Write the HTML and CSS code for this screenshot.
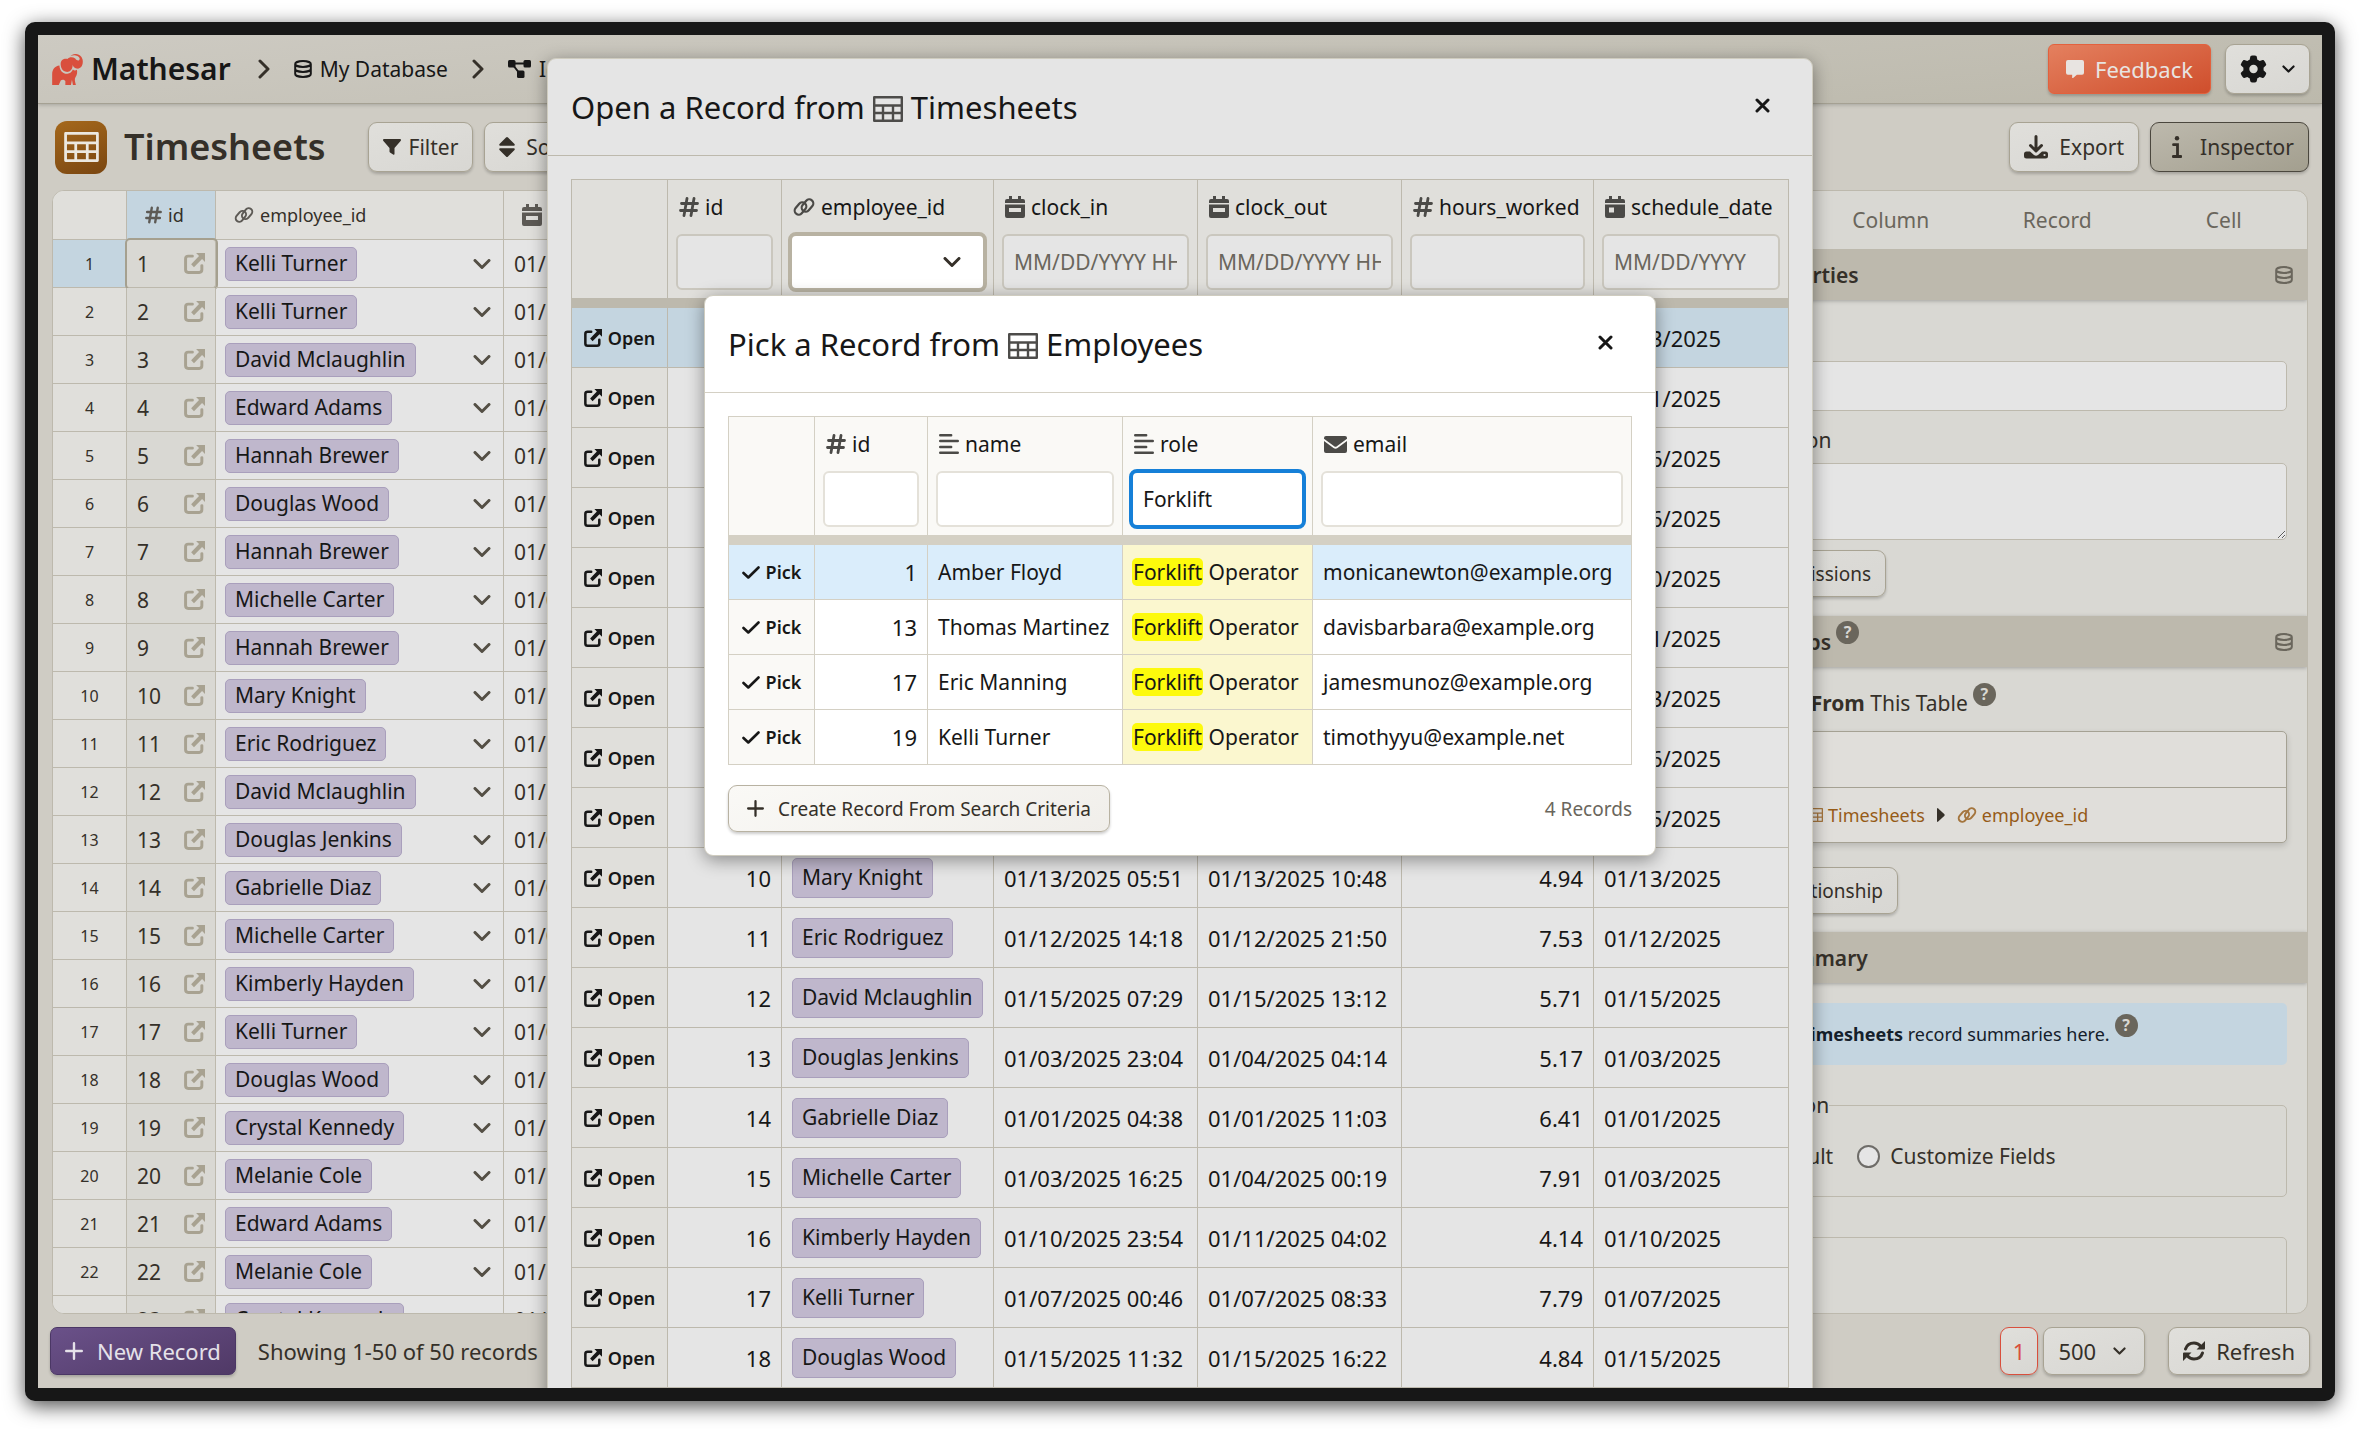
FILE: index.html
```html
<!DOCTYPE html>
<html lang="en">
<head>
    <meta charset="UTF-8">
    <meta name="viewport" content="width=device-width, initial-scale=1.0">
    <title>Timesheets | Mathesar</title>
    <link rel="stylesheet" href="styles.css">
</head>
<body>

<!-- Icon sprite -->
<svg class="sprite" aria-hidden="true">
    <symbol id="i-logo" viewBox="0 0 93 94">
        <path fill="currentColor" d="M0 94V62C0 46 8 37 22 35C23 52 34 61 46 60C54 59 60 54 63 47C66 51 71 51 75 48C77 57 75 64 71 70C67 76 69 84 72 94H63L60 78L57 94H40V82C36 77 30 77 26 80L20 94z"/>
        <path fill="currentColor" d="M26 34C24 20 34 13 46 15C52 9 62 8 70 14C77 24 85 20 83 12C78 4 66 1 55 7C64-4 87-3 92 16C96 34 86 47 74 44C67 43 63 38 62 32C63 47 53 56 42 54C32 52 27 44 26 34z"/>
    </symbol>
    <symbol id="i-chevron-right" viewBox="0 0 12 20"><path d="M2 2l8 8-8 8" fill="none" stroke="currentColor" stroke-width="3" stroke-linecap="round" stroke-linejoin="round"/></symbol>
    <symbol id="i-chevron-down" viewBox="0 0 18 10"><path d="M2 1.500l7 7 7-7" fill="none" stroke="currentColor" stroke-width="3" stroke-linecap="round" stroke-linejoin="round"/></symbol>
    <symbol id="i-database" viewBox="0 0 18 18"><path d="M1.200 4c0-1.600 3.500-2.900 7.800-2.900S16.800 2.400 16.800 4 13.300 6.900 9 6.900 1.200 5.600 1.200 4zM1.200 4v10c0 1.600 3.500 2.900 7.800 2.900s7.800-1.300 7.800-2.900V4M1.200 9c0 1.600 3.500 2.900 7.800 2.900S16.800 10.600 16.800 9" fill="none" stroke="currentColor" stroke-width="2"/></symbol>
    <symbol id="i-schema" viewBox="0 0 23 18"><path d="M6 3.500h12M5 5l7 9" fill="none" stroke="currentColor" stroke-width="2"/><rect x="0" y="0" width="7.500" height="7.500" rx="1.500" fill="currentColor"/><rect x="15.500" y="0" width="7.500" height="7.500" rx="1.500" fill="currentColor"/><rect x="9" y="10.500" width="7.500" height="7.500" rx="1.500" fill="currentColor"/></symbol>
    <symbol id="i-table" viewBox="0 0 30 26"><path d="M1.200 1.200h27.600v23.600H1.200zM1 9.500h28M1 17h28M10 9.500V25M20 9.500V25" fill="none" stroke="currentColor" stroke-width="2.400" stroke-linejoin="round"/></symbol>
    <symbol id="i-filter" viewBox="0 0 18 16"><path d="M0 1q0-1 1-1h16q1 0 1 1 0 .6-.4 1L11.500 9v6q0 1-1 .8L7 13.500q-.5-.4-.5-1V9L.4 2Q0 1.600 0 1z" fill="currentColor"/></symbol>
    <symbol id="i-sort" viewBox="0 0 16 20"><path d="M7 .6q1-1 2 0l6.500 6.500q.9 1.400-.8 1.700H1.300Q-.4 8.500.5 7.100zM7 19.400q1 1 2 0l6.500-6.500q.9-1.400-.8-1.700H1.300q-1.700.3-.8 1.700z" fill="currentColor"/></symbol>
    <symbol id="i-hash" viewBox="0 0 20 20"><path d="M8 1.500L5 18.500M15 1.500L12 18.500M2.500 6.500h16M1.500 13.500h16" fill="none" stroke="currentColor" stroke-width="2.800" stroke-linecap="round"/></symbol>
    <symbol id="i-link" viewBox="0 0 22 18"><g fill="none" stroke="currentColor" stroke-width="2.200"><rect x="-4" y="-6.800" width="8" height="13.600" rx="4" transform="translate(7.500 10.500) rotate(40)"/><rect x="-4" y="-6.800" width="8" height="13.600" rx="4" transform="translate(14.500 7.500) rotate(40)"/></g></symbol>
    <symbol id="i-calendar" viewBox="0 0 20 22"><path d="M4 0h3v3h6V0h3v3h2q2 0 2 2v2H0V5q0-2 2-2h2zM0 8.500h20V20q0 2-2 2H2q-2 0-2-2zM4 12v4h12v-4z" fill="currentColor" fill-rule="evenodd"/></symbol>
    <symbol id="i-calendar-day" viewBox="0 0 20 22"><path d="M4 0h3v3h6V0h3v3h2q2 0 2 2v2H0V5q0-2 2-2h2zM0 8.500h20V20q0 2-2 2H2q-2 0-2-2zM4 11.500v5h5v-5z" fill="currentColor" fill-rule="evenodd"/></symbol>
    <symbol id="i-open" viewBox="0 0 20 20"><path d="M8 3H4Q1.500 3 1.500 5.500v10.500Q1.500 18.500 4 18.500h10.500q2.500 0 2.500-2.500v-4" fill="none" stroke="currentColor" stroke-width="2.800" stroke-linecap="round"/><path d="M11.500 0H20v8.500l-2.800-2.800-7.700 7.800L6.800 10.600l7.500-7.800z" fill="currentColor"/></symbol>
    <symbol id="i-text" viewBox="0 0 20 20"><path d="M1.200 1.300h11M1.200 7h17.600M1.200 13h11M1.200 18.700h17.600" fill="none" stroke="currentColor" stroke-width="2.400" stroke-linecap="round"/></symbol>
    <symbol id="i-mail" viewBox="0 0 23 17"><path d="M2 0h19q2 0 2 2v.8l-10.500 7.600q-1 .7-2 0L0 2.800V2q0-2 2-2zM0 5l9.500 7q2 1.400 4 0L23 5v10q0 2-2 2H2q-2 0-2-2z" fill="currentColor"/></symbol>
    <symbol id="i-check" viewBox="0 0 18 13"><path d="M1.500 7l4.800 4.500L16.500 1.500" fill="none" stroke="currentColor" stroke-width="2.600" stroke-linecap="round" stroke-linejoin="round"/></symbol>
    <symbol id="i-close" viewBox="0 0 15 15"><path d="M2 2l11 11M13 2L2 13" fill="none" stroke="currentColor" stroke-width="3" stroke-linecap="round"/></symbol>
    <symbol id="i-plus" viewBox="0 0 18 18"><path d="M9 1.200v15.600M1.200 9h15.600" fill="none" stroke="currentColor" stroke-width="2.400" stroke-linecap="round"/></symbol>
    <symbol id="i-chat" viewBox="0 0 19 19"><path d="M2 0h15q2 0 2 2v11.500q0 2-2 2h-5.500L7.500 19q-1 .5-1-.5v-3H2q-2 0-2-2V2q0-2 2-2z" fill="currentColor"/></symbol>
    <symbol id="i-gear" viewBox="0 0 512 512"><path fill="currentColor" d="M495.900 166.600c3.200 8.700 .5 18.400-6.400 24.600l-43.300 39.400c1.100 8.300 1.700 16.800 1.700 25.400s-.6 17.100-1.700 25.400l43.300 39.400c6.900 6.200 9.600 15.900 6.400 24.600c-4.400 11.900-9.700 23.300-15.800 34.300l-4.700 8.100c-6.600 11-14 21.400-22.100 31.200c-5.900 7.200-15.700 9.600-24.500 6.800l-55.700-17.700c-13.400 10.300-28.200 18.900-44 25.400l-12.500 57.100c-2 9.100-9 16.300-18.200 17.800c-13.800 2.300-28 3.500-42.500 3.500s-28.700-1.200-42.500-3.500c-9.200-1.500-16.200-8.700-18.200-17.800l-12.500-57.100c-15.800-6.500-30.600-15.100-44-25.400L83.100 425.900c-8.800 2.800-18.600 .3-24.500-6.800c-8.100-9.800-15.500-20.200-22.100-31.200l-4.700-8.100c-6.100-11-11.400-22.400-15.800-34.300c-3.200-8.700-.5-18.400 6.400-24.600l43.300-39.400C64.600 273.100 64 264.600 64 256s.6-17.100 1.700-25.400L22.400 191.200c-6.900-6.200-9.600-15.900-6.400-24.600c4.400-11.900 9.700-23.300 15.800-34.300l4.700-8.100c6.600-11 14-21.400 22.100-31.200c5.900-7.200 15.700-9.600 24.500-6.800l55.700 17.700c13.400-10.300 28.200-18.900 44-25.400l12.500-57.100c2-9.100 9-16.300 18.200-17.800C227.300 1.200 241.500 0 256 0s28.700 1.200 42.500 3.500c9.200 1.500 16.200 8.700 18.200 17.800l12.500 57.100c15.800 6.500 30.600 15.100 44 25.400l55.700-17.700c8.800-2.800 18.600-.3 24.500 6.800c8.100 9.800 15.500 20.200 22.100 31.200l4.700 8.100c6.100 11 11.400 22.400 15.800 34.300zM256 336a80 80 0 1 0 0-160 80 80 0 1 0 0 160z"/></symbol>
    <symbol id="i-download" viewBox="0 0 24 24"><path d="M12 1.500v14M6.500 10.500l5.500 5.500 5.500-5.500" fill="none" stroke="currentColor" stroke-width="3" stroke-linecap="round" stroke-linejoin="round"/><path d="M2.500 16.500H6l4 3.500q2 1.500 4 0l4-3.500h3.500Q24 16.500 24 19v2q0 2.500-2.500 2.500h-19Q0 23.500 0 21v-2q0-2.500 2.500-2.500z" fill="currentColor"/><circle cx="20.500" cy="20" r="1.100" fill="#dddcd8"/></symbol>
    <symbol id="i-info" viewBox="0 0 10 22"><path d="M1.500 8.700h4v11.500M1.200 20.500h7.800" fill="none" stroke="currentColor" stroke-width="2.800" stroke-linecap="round"/><circle cx="5" cy="2.200" r="2.200" fill="currentColor"/></symbol>
    <symbol id="i-refresh" viewBox="0 0 22 22"><path d="M2.500 9Q4.500 3 11 3q4 0 7 3.500M19.500 13Q17.500 19 11 19q-4 0-7-3.500" fill="none" stroke="currentColor" stroke-width="3" stroke-linecap="round"/><path d="M22 1v7.500q0 1-1 1h-7.500zM0 21v-7.500q0-1 1-1h7.500z" fill="currentColor"/></symbol>
    <symbol id="i-caret" viewBox="0 0 8 14"><path d="M0 1q0-1.500 1.200-.6l6 5.600q1 1 0 2l-6 5.600Q0 14.500 0 13z" fill="currentColor"/></symbol>
</svg>

<div class="window">
    <header class="topbar">
        <nav class="breadcrumb">
            <a href="#" class="brand"><svg class="icon logo"><use href="#i-logo"/></svg>Mathesar</a>
            <svg class="icon sep"><use href="#i-chevron-right"/></svg>
            <a href="#"><svg class="icon db"><use href="#i-database"/></svg>My Database</a>
            <svg class="icon sep"><use href="#i-chevron-right"/></svg>
            <a href="#"><svg class="icon schema"><use href="#i-schema"/></svg>Ice Cream Employee Management</a>
        </nav>
        <div class="topbar-actions">
            <button class="btn btn-feedback"><svg class="icon db"><use href="#i-chat"/></svg>Feedback</button>
            <button class="btn btn-settings" aria-label="Settings"><svg class="icon gear"><use href="#i-gear"/></svg><svg class="icon caret-sm"><use href="#i-chevron-down"/></svg></button>
        </div>
    </header>

    <div class="titlebar">
        <span class="table-badge"><svg class="icon badge-icon"><use href="#i-table"/></svg></span>
        <h1>Timesheets</h1>
        <button class="btn btn-filter"><svg class="icon filter"><use href="#i-filter"/></svg>Filter</button>
        <button class="btn btn-sort"><svg class="icon sort"><use href="#i-sort"/></svg>Sort</button>
        <div class="titlebar-right">
            <button class="btn btn-export"><svg class="icon download"><use href="#i-download"/></svg>Export</button>
            <button class="btn btn-inspector"><svg class="icon info"><use href="#i-info"/></svg>Inspector</button>
        </div>
    </div>

    <main class="workspace">
        <div class="sheet">
            <table class="grid">
                <colgroup><col class="g-num"><col class="g-id"><col class="g-emp"><col></colgroup>
                <thead>
                    <tr>
                        <th></th>
                        <th class="selected"><svg class="icon hash-sm"><use href="#i-hash"/></svg>id</th>
                        <th><svg class="icon link-sm"><use href="#i-link"/></svg>employee_id</th>
                        <th><svg class="icon cal"><use href="#i-calendar"/></svg>clock_in</th>
                    </tr>
                </thead>
                <tbody id="gridRows"></tbody>
            </table>
        </div>

        <aside class="inspector">
            <div class="tabs">
                <button class="tab active">Table</button>
                <button class="tab">Column</button>
                <button class="tab">Record</button>
                <button class="tab">Cell</button>
            </div>
            <div class="inspector-body">
                <h2 class="section-head"><span>Table Properties</span><svg class="icon db"><use href="#i-database"/></svg></h2>
                <div class="section props">
                    <label for="tableName">Name</label>
                    <input type="text" id="tableName">
                    <label for="tableDesc">Table Description</label>
                    <textarea id="tableDesc"></textarea>
                    <button class="btn btn-small btn-perms">Table Permissions</button>
                </div>
                <h2 class="section-head"><span>Relationships</span><i class="help">?</i><svg class="icon db"><use href="#i-database"/></svg></h2>
                <div class="section rel">
                    <p class="rel-title"><span><b>Links From</b> This Table</span><i class="help">?</i></p>
                    <div class="rel-card">
                        <div class="rel-row"></div>
                        <div class="rel-row">
                            <a href="#"><svg class="icon tbl-sm"><use href="#i-table"/></svg>Timesheets</a>
                            <svg class="icon caret"><use href="#i-caret"/></svg>
                            <a href="#"><svg class="icon link-sm"><use href="#i-link"/></svg>employee_id</a>
                        </div>
                    </div>
                    <button class="btn btn-small btn-rel">Create Relationship</button>
                </div>
                <h2 class="section-head"><span>Record Summary</span></h2>
                <div class="section sum">
                    <p class="notice"><span>See <b>Timesheets</b> record summaries here.</span><i class="help">?</i></p>
                    <fieldset>
                        <legend>Configuration</legend>
                        <div class="radios">
                            <label class="radio"><input type="radio" name="summary" checked>Default</label>
                            <label class="radio"><input type="radio" name="summary">Customize Fields</label>
                        </div>
                    </fieldset>
                    <fieldset class="preview"></fieldset>
                </div>
            </div>
        </aside>
    </main>

    <footer class="statusbar">
        <button class="btn btn-new"><svg class="icon db"><use href="#i-plus"/></svg>New Record</button>
        <span class="count">Showing 1-50 of 50 records</span>
        <div class="pager">
            <button class="btn btn-page">1</button>
            <button class="btn btn-size">500<svg class="icon caret-sm"><use href="#i-chevron-down"/></svg></button>
            <button class="btn btn-refresh"><svg class="icon refresh"><use href="#i-refresh"/></svg>Refresh</button>
        </div>
    </footer>

    <!-- Open record modal -->
    <div class="overlay">
        <section class="modal modal-open" role="dialog" aria-label="Open a Record">
            <div class="modal-head">
                <h2>Open a Record from <svg class="icon tbl"><use href="#i-table"/></svg> Timesheets</h2>
                <button class="close" aria-label="Close"><svg class="icon close-icon"><use href="#i-close"/></svg></button>
            </div>
            <div class="modal-body">
                <table class="records">
                    <colgroup><col class="o-act"><col class="o-id"><col class="o-emp"><col class="o-in"><col class="o-out"><col class="o-hours"><col class="o-date"></colgroup>
                    <thead>
                        <tr>
                            <th></th>
                            <th><label for="f-id"><svg class="icon hash"><use href="#i-hash"/></svg>id</label><input type="text" id="f-id"></th>
                            <th><label for="f-emp"><svg class="icon link"><use href="#i-link"/></svg>employee_id</label><button class="dropdown" id="f-emp"><svg class="icon chev"><use href="#i-chevron-down"/></svg></button></th>
                            <th><label for="f-in"><svg class="icon cal"><use href="#i-calendar"/></svg>clock_in</label><input type="text" id="f-in" placeholder="MM/DD/YYYY HH:MM"></th>
                            <th><label for="f-out"><svg class="icon cal"><use href="#i-calendar"/></svg>clock_out</label><input type="text" id="f-out" placeholder="MM/DD/YYYY HH:MM"></th>
                            <th><label for="f-hours"><svg class="icon hash"><use href="#i-hash"/></svg>hours_worked</label><input type="text" id="f-hours"></th>
                            <th><label for="f-date"><svg class="icon cal"><use href="#i-calendar-day"/></svg>schedule_date</label><input type="text" id="f-date" placeholder="MM/DD/YYYY"></th>
                        </tr>
                        <tr class="divider"><td colspan="7"></td></tr>
                    </thead>
                    <tbody id="openRows"></tbody>
                </table>
            </div>
        </section>
    </div>

    <!-- Pick record modal -->
    <div class="overlay overlay-pick">
        <section class="modal modal-pick" role="dialog" aria-label="Pick a Record">
            <div class="modal-head">
                <h2>Pick a Record from <svg class="icon tbl"><use href="#i-table"/></svg> Employees</h2>
                <button class="close" aria-label="Close"><svg class="icon close-icon"><use href="#i-close"/></svg></button>
            </div>
            <div class="modal-body">
                <table class="records">
                    <colgroup><col class="p-act"><col class="p-id"><col class="p-name"><col class="p-role"><col class="p-email"></colgroup>
                    <thead>
                        <tr>
                            <th></th>
                            <th><label for="p-id"><svg class="icon hash"><use href="#i-hash"/></svg>id</label><input type="text" id="p-id"></th>
                            <th><label for="p-name"><svg class="icon hash"><use href="#i-text"/></svg>name</label><input type="text" id="p-name"></th>
                            <th><label for="p-role"><svg class="icon hash"><use href="#i-text"/></svg>role</label><input type="text" class="focused" id="p-role" value="Forklift"></th>
                            <th><label for="p-email"><svg class="icon mail"><use href="#i-mail"/></svg>email</label><input type="text" id="p-email"></th>
                        </tr>
                        <tr class="divider"><td colspan="5"></td></tr>
                    </thead>
                    <tbody id="pickRows"></tbody>
                </table>
                <div class="pick-foot">
                    <button class="btn btn-small btn-create"><svg class="icon plus-sm"><use href="#i-plus"/></svg>Create Record From Search Criteria</button>
                    <span>4 Records</span>
                </div>
            </div>
        </section>
    </div>
</div>

<script src="script.js"></script>
</body>
</html>
```
FILE: styles.css
```css
* {
    box-sizing: border-box;
}
body {
    margin: 0;
    padding: 22px 25px 28px;
    height: 100vh;
    font-family: "Noto Sans", "Open Sans", sans-serif;
    font-size: 21px;
    line-height: 28px;
    color: #353029;
    background: #fff;
}
button, input, textarea {
    font: inherit;
    color: inherit;
}
a {
    color: inherit;
    text-decoration: none;
}
h1, h2, p {
    margin: 0;
}
.sprite {
    position: absolute;
    width: 0;
    height: 0;
}

/* Window frame */
.window {
    position: relative;
    display: flex;
    flex-direction: column;
    height: 100%;
    border: 13px solid #171717;
    border-radius: 10px;
    background: #cfccc4;
    overflow: hidden;
    box-shadow: 0 5px 20px rgba(0, 0, 0, 0.7);
}

/* Icons */
.icon { flex: none; width: 20px; height: 20px; }
.logo { width: 31px; height: 31px; color: #d94f3d; }
.sep { width: 12px; height: 20px; color: #353029; }
.db { width: 18px; height: 18px; }
.schema { width: 23px; height: 18px; }
.gear { width: 27px; height: 28px; }
.caret-sm { width: 13px; height: 8px; }
.badge-icon { width: 35px; height: 30px; }
.filter { width: 18px; height: 16px; }
.sort { width: 16px; height: 20px; }
.download { width: 24px; height: 24px; }
.info { width: 10px; height: 22px; }
.refresh { width: 22px; height: 22px; }
.hash-sm { width: 17px; height: 18px; }
.link-sm { width: 20px; height: 16px; }
.cal { width: 20px; height: 22px; }
.hash { width: 20px; height: 20px; }
.link { width: 22px; height: 18px; }
.mail { width: 23px; height: 17px; }
.tbl { width: 30px; height: 26px; color: #4d4c4a; }
.tbl-sm { width: 16px; height: 16px; }
.caret { width: 8px; height: 14px; }
.chev { width: 18px; height: 10px; }
.check { width: 18px; height: 13px; }
.open-sm { width: 18px; height: 18px; }
.open-lg { width: 21px; height: 21px; }
.plus-sm { width: 17px; height: 17px; }
.close-icon { width: 15px; height: 15px; }

/* Buttons */
.btn {
    display: flex;
    align-items: center;
    justify-content: center;
    height: 50px;
    padding: 0 14px;
    gap: 8px;
    border: 1px solid #a8a393;
    border-radius: 9px;
    background: linear-gradient(160deg, #e0dfdb, #d8d7d3);
    box-shadow: 0 2px 3px rgba(0, 0, 0, 0.2);
    white-space: nowrap;
}
.btn-small {
    height: 47px;
    font-size: 19px;
}

/* Top bar */
.topbar {
    flex: none;
    display: flex;
    align-items: center;
    justify-content: space-between;
    height: 69px;
    padding: 0 12px 0 14px;
    border-bottom: 1px solid #a5a193;
    background: linear-gradient(175deg, #cdcac2, #bcb9ac);
    box-shadow: 0 1px 4px rgba(0, 0, 0, 0.2);
    color: #171717;
}
.breadcrumb, .breadcrumb a {
    display: flex;
    align-items: center;
    white-space: nowrap;
}
.breadcrumb {
    gap: 24px;
}
.breadcrumb a {
    gap: 8px;
}
.breadcrumb .brand {
    font-size: 30px;
    font-weight: 600;
    margin-right: 3px;
}
.topbar-actions {
    display: flex;
    gap: 14px;
}
.btn-feedback {
    gap: 11px;
    padding: 0 17px;
    border-color: #e3613d;
    border-radius: 6px;
    background: linear-gradient(160deg, #e4805f, #cf4e2c);
    color: #e8e4e1;
    font-size: 22px;
}
.btn-settings {
    gap: 15px;
}

/* Title bar */
.titlebar {
    flex: none;
    display: flex;
    align-items: center;
    gap: 11px;
    height: 86px;
    padding: 0 13px 0 17px;
}
.table-badge {
    display: flex;
    align-items: center;
    justify-content: center;
    width: 52px;
    height: 53px;
    border-radius: 12px;
    background: linear-gradient(160deg, #a5681c, #7a4611);
    color: #ece8e0;
}
.titlebar h1 {
    margin: 0 31px 0 6px;
    font-size: 36px;
    font-weight: 600;
    line-height: 48px;
}
.titlebar-right {
    display: flex;
    gap: 11px;
    margin-left: auto;
}
.btn-sort, .btn-export, .btn-inspector {
    gap: 11px;
}
.btn-inspector {
    gap: 18px;
    padding: 0 14px 0 21px;
    border-color: #4b473e;
    background: linear-gradient(160deg, #bdb9ad, #a39f8f);
}

/* Workspace */
.workspace {
    flex: 1;
    min-height: 0;
    display: flex;
    gap: 12px;
    padding: 0 14px;
}
.sheet {
    flex: 1;
    min-width: 0;
    overflow: hidden;
    border: 1px solid #bdb9ad;
    border-radius: 12px;
    background: #e5e5e5;
}
table {
    border-collapse: separate;
    border-spacing: 0;
}
.grid {
    table-layout: fixed;
    width: 100%;
}
.g-num { width: 74px; }
.g-id { width: 89px; }
.g-emp { width: 288px; }
.grid th, .grid td {
    height: 48px;
    padding: 0 10px;
    border-right: 1px solid #bdb9ad;
    border-bottom: 1px solid #bdb9ad;
    text-align: left;
    white-space: nowrap;
}
.grid th {
    height: 49px;
    padding: 0 18px;
    background: #e0dfdb;
    font-size: 18px;
    font-weight: 400;
}
.grid .icon {
    vertical-align: middle;
}
.grid th .icon {
    margin: -4px 6px 0 0;
    color: #5d5a55;
}
.grid td:first-child {
    background: #e0dfdb;
    font-size: 16px;
    text-align: center;
}
.grid td:nth-child(2) {
    background: #d9d8d3;
}
.grid th.selected, .grid tr:first-child td:first-child {
    background: #c4d5e0;
}
.grid tr:first-child td:nth-child(2) {
    box-shadow: 0 0 0 2px #a5a08f;
    border-radius: 3px;
}
.cell {
    display: flex;
    align-items: center;
    justify-content: space-between;
}
.cell .open-lg {
    color: #a8a291;
}
.cell .chev {
    margin-right: 2px;
    color: #544f45;
}
.pill {
    display: inline-block;
    padding: 1px 9px 2px;
    margin-left: -1px;
    line-height: 29px;
    border: 1px solid #a99fbc;
    border-radius: 5px;
    background: #bfb7cc;
    color: #171717;
}

/* Inspector */
.inspector {
    flex: none;
    display: flex;
    flex-direction: column;
    width: 668px;
    overflow: hidden;
    border: 1px solid #bdb9ad;
    border-radius: 12px;
    background: #d9d8d3;
}
.tabs {
    flex: none;
    display: flex;
    height: 58px;
}
.tab {
    flex: 1;
    border: 0;
    background: none;
    color: #6a665c;
}
.inspector-body {
    flex: 1;
    min-height: 0;
    overflow: hidden;
}
.section-head {
    display: flex;
    align-items: center;
    height: 51px;
    padding: 0 14px 0 52px;
    background: #bdb9ad;
    box-shadow: 0 1px 4px rgba(0, 0, 0, 0.25);
    font-size: 21px;
    font-weight: 600;
}
.section-head .icon {
    margin-left: auto;
    color: #6a665c;
}
.section {
    padding: 0 20px;
}
.help {
    flex: none;
    width: 23px;
    height: 23px;
    margin: -18px 0 0 5px;
    border-radius: 50%;
    background: #6a665c;
    color: #d9d8d3;
    font-size: 16px;
    font-style: normal;
    font-weight: 700;
    line-height: 23px;
    text-align: center;
}
.props {
    padding-top: 19px;
    padding-bottom: 19px;
}
.props label {
    display: block;
    height: 42px;
}
.props input, .props textarea {
    display: block;
    width: 100%;
    height: 50px;
    margin-bottom: 15px;
    border: 1px solid #bdb9ad;
    border-radius: 5px;
    background: #e5e5e5;
}
.props label + textarea {
    height: 77px;
    margin: -5px 0 10px;
}
.btn-perms {
    width: 225px;
    justify-content: flex-end;
}
.rel {
    padding-top: 22px;
    padding-bottom: 18px;
}
.rel-title {
    display: flex;
    align-items: center;
    margin: 0 0 14px 89px;
}
.rel-card {
    margin-bottom: 24px;
    border: 1px solid #a5a193;
    border-radius: 5px;
    background: #e0deda;
    box-shadow: 0 3px 6px rgba(0, 0, 0, 0.15);
    font-size: 18px;
}
.rel-row {
    display: flex;
    align-items: center;
    gap: 12px;
    height: 55px;
    padding-left: 145px;
}
.rel-row + .rel-row {
    border-top: 1px solid #a5a193;
}
.rel-row a {
    display: flex;
    align-items: center;
    gap: 5px;
    color: #965b17;
}
.rel-row a .icon {
    opacity: 0.8;
}
.btn-rel {
    width: 237px;
    justify-content: flex-end;
}
.sum {
    padding-top: 20px;
}
.notice {
    display: flex;
    align-items: center;
    height: 62px;
    margin-bottom: 26px;
    padding-left: 104px;
    border-radius: 5px;
    background: #c4d5e0;
    color: #14202b;
    font-size: 18px;
}
fieldset {
    height: 106px;
    margin: 0 0 28px;
    padding: 22px 20px 0 31px;
    border: 1px solid #bdb9ad;
    border-radius: 5px;
}
fieldset.preview {
    margin-top: 40px;
}
legend {
    padding: 0;
}
.radios {
    display: flex;
    gap: 24px;
    padding-left: 35px;
}
.radio {
    display: flex;
    align-items: center;
    height: 30px;
    gap: 10px;
}
.radio input {
    appearance: none;
    width: 23px;
    height: 23px;
    margin: 0;
    border: 2px solid #6e6c68;
    border-radius: 50%;
    background: #e5e5e5;
}

/* Footer */
.statusbar {
    flex: none;
    display: flex;
    align-items: center;
    height: 74px;
    padding: 0 12px;
    font-size: 22px;
}
.statusbar .btn {
    height: 48px;
}
.btn-new {
    gap: 14px;
    border-color: #4b3765;
    border-radius: 7px;
    background: linear-gradient(160deg, #6a5189, #503966);
    color: #e5e1e9;
}
.count {
    margin-left: 22px;
}
.pager {
    display: flex;
    gap: 5px;
    margin-left: auto;
}
.statusbar .btn-page {
    border-color: #d94f3d;
    color: #d94f3d;
    padding: 0 12px;
}
.btn-size {
    gap: 17px;
    padding: 0 18px 0 14px;
}
.btn-refresh {
    gap: 11px;
    margin-left: 18px;
}

/* Modals */
.overlay {
    position: absolute;
    inset: 0;
    display: flex;
    justify-content: center;
    align-items: flex-start;
    padding-top: 23px;
}
.overlay-pick {
    padding-top: 260px;
}
.modal {
    --line: #bdb9ad;
    --head: #e0dfdb;
    --row: #e5e5e5;
    --active: #c4d5e0;
    --box: #cac7be;
    border: 1px solid #cfccbf;
    border-radius: 9px;
    background: var(--row);
    box-shadow: 0 4px 18px rgba(0, 0, 0, 0.4);
    color: #171717;
}
.modal-pick {
    --line: #d4d0c4;
    --head: #faf9f6;
    --row: #fff;
    --active: #daedfb;
    --box: #e4e1d9;
}
.modal-head {
    display: flex;
    align-items: center;
    justify-content: space-between;
    height: 97px;
    padding: 0 34px 3px 23px;
    border-bottom: 1px solid var(--line);
}
.modal-head h2 {
    padding-top: 2px;
    font-size: 31px;
    font-weight: 400;
    line-height: 40px;
}
.modal-head .tbl {
    vertical-align: -3px;
}
.close {
    display: flex;
    padding: 8px;
    border: 0;
    background: none;
}
.modal-body {
    padding: 23px;
}
.records {
    table-layout: fixed;
    width: 100%;
    border-top: 1px solid var(--line);
    border-left: 1px solid var(--line);
}
.modal-open { width: 1266px; }
.modal-pick { width: 952px; }
.o-act { width: 96px; }
.o-id { width: 114px; }
.o-emp { width: 212px; }
.o-in, .o-out { width: 204px; }
.o-hours { width: 192px; }
.p-act { width: 86px; }
.p-id { width: 113px; }
.p-name { width: 195px; }
.p-role { width: 190px; }
.records th, .records td {
    padding: 0 10px;
    border-right: 1px solid var(--line);
    border-bottom: 1px solid var(--line);
    text-align: left;
    white-space: nowrap;
    overflow: hidden;
}
.records th {
    height: 118px;
    padding: 4px 8px 0;
    border-bottom: 0;
    background: var(--head);
    font-weight: 400;
    vertical-align: top;
}
.records th label {
    display: flex;
    align-items: center;
    gap: 6px;
    height: 46px;
    margin-bottom: 4px;
    padding-left: 3px;
}
.records th label .icon {
    color: #4b4a47;
}
.records th input, .dropdown {
    display: block;
    width: 100%;
    height: 56px;
    padding: 0 10px;
    border: 2px solid var(--box);
    border-radius: 6px;
    background: var(--row);
}
.records th input::placeholder {
    color: #6a665c;
}
/* Focused boxes grow past their cell padding */
.records th .dropdown, .records th .focused {
    width: calc(100% + 4px);
    height: 60px;
    margin: -2px;
    border: 4px solid #b8b2a2;
    border-radius: 8px;
}
.records th .dropdown {
    display: flex;
    align-items: center;
    justify-content: flex-end;
    padding-right: 22px;
    background: #fff;
    color: #353029;
}
.records th .focused {
    border-color: #1680d8;
    outline: 0;
}
.records .divider td {
    height: 10px;
    padding: 0;
    border: 0;
    background: var(--line);
}
.records tbody td {
    height: 60px;
    background: var(--row);
}
.records tbody td:first-child {
    background: var(--head);
    font-size: 18px;
    font-weight: 600;
    text-align: center;
}
.records tbody tr:first-child td {
    background: var(--active);
}
.records .num {
    text-align: right;
}
.records .num, .records .date {
    font-size: 22px;
}
.records td .icon {
    vertical-align: middle;
    margin: -4px 6px 0 0;
}
.records .pill {
    padding: 4px 9px 5px;
    margin-left: 0;
}
.modal-pick .records tbody td {
    height: 55px;
}
.modal-pick .records tbody td.match {
    background: #fbf7cf;
}
mark {
    padding: 0 1px;
    margin-left: -1px;
    border-radius: 5px;
    background: #fdfa0c;
    color: inherit;
}
.pick-foot {
    display: flex;
    align-items: center;
    justify-content: space-between;
    margin-top: 20px;
    font-size: 19px;
    color: #6a665c;
}
.btn-create {
    gap: 14px;
    padding: 0 18px;
    border-color: #b8b2a2;
    background: linear-gradient(160deg, #faf9f6, #f0eeea);
    color: #353029;
}
```
FILE: script.js
```js
const names = ["Kelli Turner", "Kelli Turner", "David Mclaughlin", "Edward Adams", "Hannah Brewer",
    "Douglas Wood", "Hannah Brewer", "Michelle Carter", "Hannah Brewer", "Mary Knight", "Eric Rodriguez",
    "David Mclaughlin", "Douglas Jenkins", "Gabrielle Diaz", "Michelle Carter", "Kimberly Hayden",
    "Kelli Turner", "Douglas Wood", "Crystal Kennedy", "Melanie Cole", "Edward Adams", "Melanie Cole",
    "Crystal Kennedy"];

// clock in, clock out, hours worked, schedule date
const shifts = [
    ["01/13/2025 05:12", "01/13/2025 12:40", "7.47", "01/13/2025"],
    ["01/11/2025 06:30", "01/11/2025 12:02", "5.53", "01/11/2025"],
    ["01/06/2025 09:14", "01/06/2025 16:20", "7.10", "01/06/2025"],
    ["01/06/2025 11:05", "01/06/2025 17:11", "6.10", "01/06/2025"],
    ["01/10/2025 08:00", "01/10/2025 13:18", "5.30", "01/10/2025"],
    ["01/11/2025 07:45", "01/11/2025 12:15", "4.50", "01/11/2025"],
    ["01/13/2025 10:22", "01/13/2025 17:34", "7.20", "01/13/2025"],
    ["01/06/2025 03:10", "01/06/2025 09:58", "6.80", "01/06/2025"],
    ["01/15/2025 12:00", "01/15/2025 18:24", "6.40", "01/15/2025"],
    ["01/13/2025 05:51", "01/13/2025 10:48", "4.94", "01/13/2025"],
    ["01/12/2025 14:18", "01/12/2025 21:50", "7.53", "01/12/2025"],
    ["01/15/2025 07:29", "01/15/2025 13:12", "5.71", "01/15/2025"],
    ["01/03/2025 23:04", "01/04/2025 04:14", "5.17", "01/03/2025"],
    ["01/01/2025 04:38", "01/01/2025 11:03", "6.41", "01/01/2025"],
    ["01/03/2025 16:25", "01/04/2025 00:19", "7.91", "01/03/2025"],
    ["01/10/2025 23:54", "01/11/2025 04:02", "4.14", "01/10/2025"],
    ["01/07/2025 00:46", "01/07/2025 08:33", "7.79", "01/07/2025"],
    ["01/15/2025 11:32", "01/15/2025 16:22", "4.84", "01/15/2025"]
];

const employees = [
    [1, "Amber Floyd", "monicanewton@example.org"],
    [13, "Thomas Martinez", "davisbarbara@example.org"],
    [17, "Eric Manning", "jamesmunoz@example.org"],
    [19, "Kelli Turner", "timothyyu@example.net"]
];

function icon(name, cls) {
    return `<svg class="icon ${cls}"><use href="#i-${name}"/></svg>`;
}

document.getElementById("gridRows").innerHTML = names.map((name, i) => `
    <tr>
        <td>${i + 1}</td>
        <td><div class="cell">${i + 1}${icon("open", "open-lg")}</div></td>
        <td><div class="cell"><span class="pill">${name}</span>${icon("chevron-down", "chev")}</div></td>
        <td>${(shifts[i] || shifts[0])[0]}</td>
    </tr>`).join("");

document.getElementById("openRows").innerHTML = shifts.map((s, i) => `
    <tr>
        <td>${icon("open", "open-sm")}Open</td>
        <td class="num">${i + 1}</td>
        <td><span class="pill">${names[i]}</span></td>
        <td class="date">${s[0]}</td>
        <td class="date">${s[1]}</td>
        <td class="num">${s[2]}</td>
        <td class="date">${s[3]}</td>
    </tr>`).join("");

document.getElementById("pickRows").innerHTML = employees.map(([id, name, email]) => `
    <tr>
        <td>${icon("check", "check")}Pick</td>
        <td class="num">${id}</td>
        <td>${name}</td>
        <td class="match"><mark>Forklift</mark> Operator</td>
        <td>${email}</td>
    </tr>`).join("");
```
